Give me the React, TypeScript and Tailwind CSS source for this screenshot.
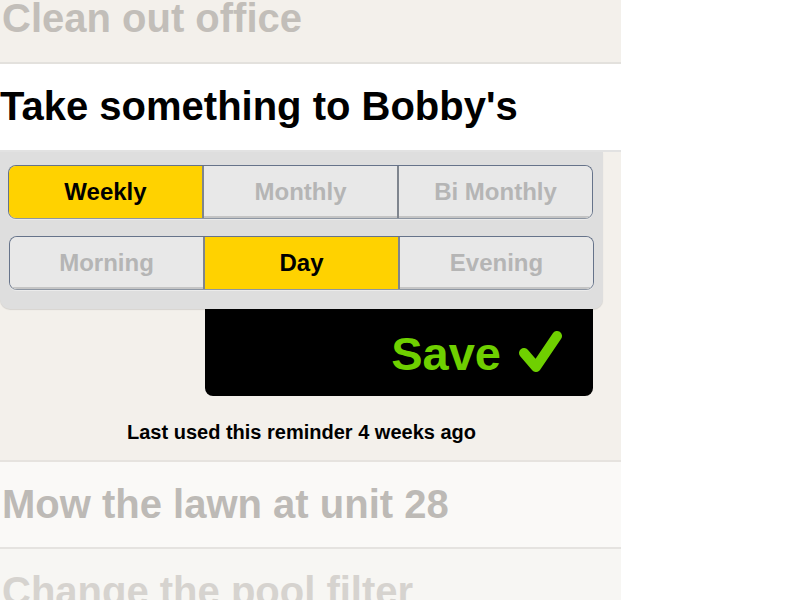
import React, { FC } from "react";

const font = { fontFamily: '"Liberation Sans", Arial, sans-serif' };

const Segmented: FC<{ options: string[]; selected: number; shift?: boolean }> = ({
  options,
  selected,
  shift,
}) => {
  return (
    <div
      className={`flex h-[54px] rounded-[8px] border border-[#66738a] border-b-[#8d96a3] overflow-hidden shadow-[0_1px_0_rgba(255,255,255,0.4)] ${
        shift ? "ml-[1px] -mr-[1px]" : ""
      }`}
    >
      {options.map((option, index) => (
        <div
          key={option}
          className={`flex-1 flex items-center justify-center text-[24px] font-bold ${
            index > 0 ? "border-l-2 border-[#7f858e]" : ""
          } ${
            index === selected
              ? "bg-[#ffd200] text-black"
              : "bg-[#e8e8e8] text-[#b5b5b5] shadow-[inset_0_-2px_0_#c4c4c4]"
          }`}
        >
          {option}
        </div>
      ))}
    </div>
  );
};

const App: FC = () => {
  return (
    <div className="min-h-[600px] bg-white overflow-hidden" style={font}>
      <div className="w-[621px] bg-[#f3f0eb] -mt-[24px]">
        <div className="h-[88px] pt-[22px] border-b-2 border-[#e3e1dd] text-[40px] leading-[40px] font-bold text-[#c2beb9] pl-[2px] whitespace-nowrap">
          Clean out office
        </div>
        <div className="h-[88px] pt-[22px] bg-white border-b-2 border-[#e2e2e2] text-[40px] leading-[40px] font-bold text-black whitespace-nowrap">
          Take something to Bobby's
        </div>

        <div className="w-[603px]">
          <div className="bg-[#dedede] rounded-b-[10px] pt-[13px] pb-[19px] pl-[8px] pr-[10px] flex flex-col gap-[17px] shadow-[0_1px_1px_rgba(0,0,0,0.12)]">
            <Segmented options={["Weekly", "Monthly", "Bi Monthly"]} selected={0} />
            <Segmented options={["Morning", "Day", "Evening"]} selected={1} shift />
          </div>

          <div className="ml-[205px] w-[388px] h-[87px] bg-black rounded-b-[8px] flex justify-end items-start pt-[21px] pr-[30px] gap-[16px]">
            <span className="text-[47px] leading-[47px] font-bold text-[#6fd000]">
              Save
            </span>
            <svg width="46" height="44" viewBox="0 0 46 44">
              <path
                d="M7 23 L19 37 L40 6"
                fill="none"
                stroke="#6fd000"
                strokeWidth="10"
                strokeLinecap="round"
                strokeLinejoin="round"
              />
            </svg>
          </div>

          <div className="pt-[26px] h-[64px] text-center text-[20px] leading-[20px] font-bold text-black">
            Last used this reminder 4 weeks ago
          </div>
        </div>

        <div className="border-t-2 border-[#e6e3df]" />
        <div className="h-[87px] pt-[22px] bg-[#faf9f7] border-b-2 border-[#e5e3e0] text-[40px] leading-[40px] font-bold text-[#bdbab6] pl-[2px] whitespace-nowrap">
          Mow the lawn at unit 28
        </div>
        <div className="h-[88px] pt-[22px] bg-[#f7f6f3] text-[40px] leading-[40px] font-bold text-[#d6d3cf] pl-[2px] whitespace-nowrap">
          Change the pool filter
        </div>
      </div>
    </div>
  );
};

export default App;
